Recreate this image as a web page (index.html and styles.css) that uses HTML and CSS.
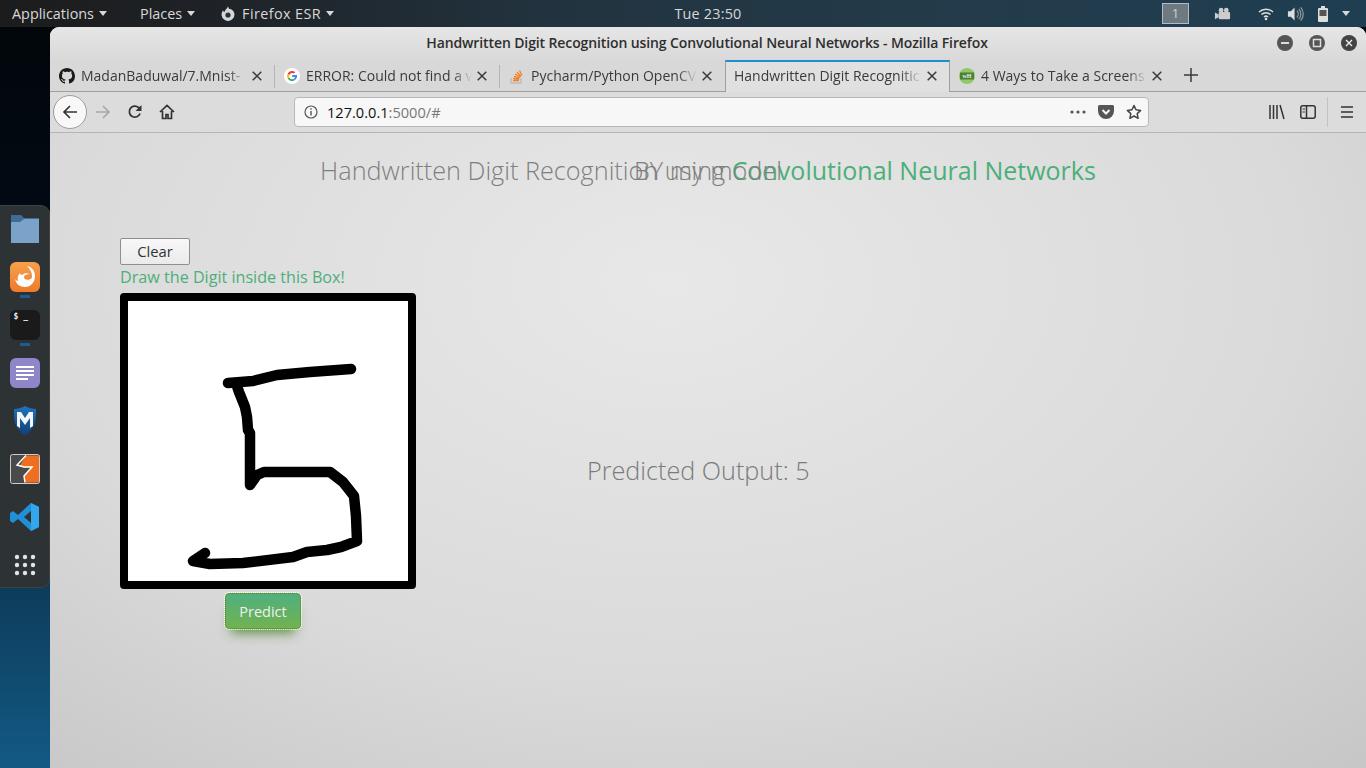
FILE: index.html
```html
<!DOCTYPE html>
<html lang="en">
<head>
<meta charset="utf-8">
<title>Handwritten Digit Recognition</title>
<link rel="stylesheet" href="styles.css">
</head>
<body>
<header class="topbar">
  <div class="top-left">
    <span class="top-item">Applications<i class="caret"></i></span>
    <span class="top-item">Places<i class="caret"></i></span>
    <span class="top-item"><svg class="ff-mini" viewBox="0 0 16 16"><path d="M8 0.5l1 2.2c3 .3 5.5 2.7 5.5 5.8A6.5 6.5 0 0 1 1.6 9.6C1.3 7.6 2 5.6 3.3 4.3c0 1 .4 1.6 1 2C5 4.2 6.5 3 8 .5z" fill="#d6d6d6"/><circle cx="8" cy="9" r="2.6" fill="#26323a"/></svg>Firefox ESR<i class="caret"></i></span>
  </div>
  <div class="clock">Tue 23:50</div>
  <div class="top-right">
    <span class="ws">1</span>
    <svg class="tray cam" viewBox="0 0 18 14"><circle cx="7.5" cy="3" r="2.5" fill="#ccc"/><circle cx="13" cy="3" r="2.5" fill="#ccc"/><rect x="5" y="5" width="12" height="7.5" rx="1" fill="#ccc"/><path d="M1 5.5l4 2v3l-4 2z" fill="#ccc"/></svg>
    <svg class="tray wifi" viewBox="0 0 16 14"><g fill="none" stroke="#ddd" stroke-width="1.5"><path d="M1 5a10 10 0 0 1 14 0"/><path d="M3.5 7.5a6.5 6.5 0 0 1 9 0"/><path d="M6 10a3 3 0 0 1 4 0"/></g><circle cx="8" cy="12" r="1.3" fill="#ddd"/></svg>
    <svg class="tray vol" viewBox="0 0 18 16"><path d="M1 5h3l4-4v14l-4-4H1z" fill="#ddd"/><g fill="none" stroke="#999" stroke-width="1.3"><path d="M10.5 4.5a5 5 0 0 1 0 7"/><path d="M12.5 2.5a8 8 0 0 1 0 11"/><path d="M14.5 1a10.5 10.5 0 0 1 0 14"/></g></svg>
    <svg class="tray batt" viewBox="0 0 12 16"><rect x="4" y="0" width="4" height="2" fill="#ddd"/><rect x="1" y="2" width="10" height="14" rx="1" fill="#ddd"/><rect x="2.5" y="4" width="7" height="6" fill="#555"/></svg>
    <i class="caret caret-tray"></i>
  </div>
</header>

<div class="desk">
  <aside class="dock">
    <svg class="dock-icon" viewBox="0 0 30 30"><path d="M1 1h10l3 3h15v25H1z" fill="#3f6c93"/><path d="M1 8h9l4-3h15v24H1z" fill="#7ba3c9"/></svg>
    <div class="dock-slot">
      <svg class="dock-icon" viewBox="0 0 30 30"><defs><linearGradient id="ffbg" x1="0" y1="0" x2="0" y2="1"><stop offset="0" stop-color="#f6a04a"/><stop offset="1" stop-color="#ee7b2c"/></linearGradient></defs><rect width="30" height="30" rx="6" fill="url(#ffbg)"/><path d="M17 4c5 1 8 5 8 10 0 6-4 11-10 11-5 0-9-3-10-8 1 1 2 2 3 2-1-3 0-6 2-8 0 1 1 2 2 2 2-2 5-2 8-1-3 0-6 1-6 3 0 3 5 4 8 1-1 3-4 5-7 4 4 1 7-2 7-6 0-4-2-7-5-10z" fill="#fff"/></svg>
      <i class="run-dot"></i>
    </div>
    <div class="dock-slot">
      <div class="term">$ _</div>
      <i class="run-dot"></i>
    </div>
    <svg class="dock-icon" viewBox="0 0 30 30"><rect width="30" height="30" rx="6" fill="#8f86c9"/><path d="M6 8h18v2H6zM6 12h18v2H6zM6 16h18v2H6zM6 20h12v2H6z" fill="#fff"/></svg>
    <svg class="dock-icon" viewBox="0 0 30 30"><defs><linearGradient id="msf" x1="0" y1="0" x2="0" y2="1"><stop offset="0" stop-color="#1f74bd"/><stop offset="1" stop-color="#123f70"/></linearGradient></defs><path d="M15 0c3 2 8 3 11 3 0 9 1 18-11 27C3 21 4 12 4 3c3 0 8-1 11-3z" fill="url(#msf)"/><path d="M7 20V6h4l4 6 4-6h4v14l-3 2V12l-5 7-5-7v10z" fill="#f2f6fa"/></svg>
    <svg class="dock-icon" viewBox="0 0 30 30"><rect x=".5" y=".5" width="29" height="29" rx="2" fill="#4a4a4a" stroke="#ccc"/><path d="M16 1.5h13v27H15l-1-6 8-9h-8l-4-2z" fill="#ef6f22"/><path d="M16 1.5L7 11l7 2h8l-8 9 1 6.5" fill="none" stroke="#fff" stroke-width="1.5"/></svg>
    <svg class="dock-icon" viewBox="0 0 30 30"><path d="M21 1l8 4v20l-8 4L8 17l-5 4-3-2v-8l3-2 5 4zM21 9l-7 6 7 6z" fill="#1f8fd8"/><path d="M21 1l8 4v20l-8 4z" fill="#34a7ec"/></svg>
    <svg class="dock-icon" viewBox="0 0 30 30"><g fill="#e2e4e5"><circle cx="7" cy="7" r="2.2"/><circle cx="15" cy="7" r="2.2"/><circle cx="23" cy="7" r="2.2"/><circle cx="7" cy="15" r="2.2"/><circle cx="15" cy="15" r="2.2"/><circle cx="23" cy="15" r="2.2"/><circle cx="7" cy="23" r="2.2"/><circle cx="15" cy="23" r="2.2"/><circle cx="23" cy="23" r="2.2"/></g></svg>
  </aside>

  <main class="window">
    <div class="titlebar">
      <span class="title">Handwritten Digit Recognition using Convolutional Neural Networks - Mozilla Firefox</span>
      <div class="win-btns">
        <svg viewBox="0 0 16 16"><circle cx="8" cy="8" r="8" fill="#555"/><rect x="4" y="7" width="8" height="2" fill="#ddd"/></svg>
        <svg viewBox="0 0 16 16"><circle cx="8" cy="8" r="8" fill="#555"/><rect x="4.5" y="4.5" width="7" height="7" fill="none" stroke="#ddd" stroke-width="1.5"/></svg>
        <svg viewBox="0 0 16 16"><circle cx="8" cy="8" r="8" fill="#444"/><path d="M5 5l6 6M11 5l-6 6" stroke="#eee" stroke-width="1.4"/></svg>
      </div>
    </div>

    <nav class="tabs">
      <div class="tab">
        <svg class="fav" viewBox="0 0 16 16"><path fill="#1a1a1a" d="M8 0C3.58 0 0 3.58 0 8c0 3.54 2.29 6.53 5.47 7.59.4.07.55-.17.55-.38 0-.19-.01-.82-.01-1.49-2.01.37-2.53-.49-2.69-.94-.09-.23-.48-.94-.82-1.13-.28-.15-.68-.52-.01-.53.63-.01 1.08.58 1.23.82.72 1.21 1.87.87 2.33.66.07-.52.28-.87.51-1.07-1.78-.2-3.64-.89-3.64-3.95 0-.87.31-1.59.82-2.15-.08-.2-.36-1.02.08-2.12 0 0 .67-.21 2.2.82.64-.18 1.32-.27 2-.27s1.36.09 2 .27c1.53-1.04 2.2-.82 2.2-.82.44 1.1.16 1.92.08 2.12.51.56.82 1.27.82 2.15 0 3.07-1.87 3.75-3.65 3.95.29.25.54.73.54 1.48 0 1.07-.01 1.93-.01 2.2 0 .21.15.46.55.38A8.01 8.01 0 0 0 16 8c0-4.42-3.58-8-8-8z"/></svg>
        <span class="tab-text">MadanBaduwal/7.Mnist-</span><svg class="x" viewBox="0 0 10 10"><path d="M.7.7l8.600 8.600M9.300.7L.7 9.300"/></svg>
      </div>
      <div class="tab">
        <svg class="fav" viewBox="0 0 16 16"><circle cx="8" cy="8" r="8" fill="#fff"/><path d="M3.7 10.6a5 5 0 0 0 7.4 1.4L9.8 10.8a3 3 0 0 1-4.5-1.4z" fill="#34a853"/><path d="M5.3 9.4a3 3 0 0 1 0-2.4L3.7 5.4a5 5 0 0 0 0 5.2z" fill="#fbbc05"/><path d="M5.3 7a3 3 0 0 1 4.6-1.4l1.4-1.4A5 5 0 0 0 3.7 5.4z" fill="#ea4335"/><path d="M13 7H8.2v2h2.8c-.2.7-.6 1.3-1.2 1.8l1.3 1.2C12.5 11 13.3 9.3 13 7z" fill="#4285f4"/></svg>
        <span class="tab-text">ERROR: Could not find a v</span><svg class="x" viewBox="0 0 10 10"><path d="M.7.7l8.600 8.600M9.300.7L.7 9.300"/></svg>
      </div>
      <div class="tab">
        <svg class="fav" viewBox="0 0 16 16"><path d="M2 10v5h10v-5" fill="none" stroke="#bbb" stroke-width="1.3"/><path d="M4 12.5h6M4.2 10.5l6 .5M4.8 8.3l5.800 1.500M6 6l5.200 3M8 4l4 4.500M10.500 2.500l2.500 5" stroke="#f48024" stroke-width="1.3"/></svg>
        <span class="tab-text">Pycharm/Python OpenCV</span><svg class="x" viewBox="0 0 10 10"><path d="M.7.7l8.600 8.600M9.300.7L.7 9.300"/></svg>
      </div>
      <div class="tab tab-active">
        <span class="tab-text">Handwritten Digit Recognitic</span><svg class="x" viewBox="0 0 10 10"><path d="M.7.7l8.600 8.600M9.300.7L.7 9.300"/></svg>
      </div>
      <div class="tab tab-last">
        <svg class="fav" viewBox="0 0 16 16"><circle cx="8" cy="8" r="8" fill="#8fc968"/><rect x="1" y="4.5" width="14" height="7" fill="#4f7f3a"/><text x="8" y="10.3" class="wh">wH</text></svg>
        <span class="tab-text">4 Ways to Take a Screens</span><svg class="x" viewBox="0 0 10 10"><path d="M.7.7l8.600 8.600M9.300.7L.7 9.300"/></svg>
      </div>
      <svg class="plus" viewBox="0 0 14 14"><path d="M7 0v14M0 7h14" stroke="#3a3a3a" stroke-width="1.5"/></svg>
    </nav>

    <div class="navbar">
      <span class="back"><svg viewBox="0 0 16 16"><path d="M15 8H2M8 2L2 8l6 6" fill="none" stroke="#333" stroke-width="1.7"/></svg></span>
      <svg class="nav-ic fwd" viewBox="0 0 16 16"><path d="M1 8h13M8 2l6 6-6 6" fill="none" stroke="#a8a8a8" stroke-width="1.7"/></svg>
      <svg class="nav-ic reload" viewBox="0 0 16 16"><path d="M13 9.5A5.5 5.5 0 1 1 11.5 3.5L13.5 5.5" fill="none" stroke="#333" stroke-width="1.8"/><path d="M14.5 1v6h-6z" fill="#333"/></svg>
      <svg class="nav-ic home" viewBox="0 0 16 16"><path d="M1 8l7-6.5L15 8M3.5 7v7.5h3.5v-4h2v4h3.5V7" fill="none" stroke="#333" stroke-width="1.7"/></svg>
      <div class="urlbar">
        <svg class="info" viewBox="0 0 14 14"><circle cx="7" cy="7" r="6" fill="none" stroke="#555" stroke-width="1.2"/><path d="M7 6v4.5M7 3.3v1.5" stroke="#555" stroke-width="1.4"/></svg>
        <span class="host">127.0.0.1</span><span class="rest">:5000/#</span>
        <span class="url-spacer"></span>
        <svg class="dots" viewBox="0 0 16 4"><circle cx="2" cy="2" r="1.6" fill="#555"/><circle cx="8" cy="2" r="1.6" fill="#555"/><circle cx="14" cy="2" r="1.6" fill="#555"/></svg>
        <svg class="pocket" viewBox="0 0 16 14"><path d="M1.5 0h13A1.5 1.5 0 0 1 16 1.5V6A8 8 0 0 1 0 6V1.5A1.5 1.5 0 0 1 1.5 0z" fill="#555"/><path d="M4.5 5L8 8.5 11.5 5" fill="none" stroke="#f4f4f4" stroke-width="2"/></svg>
        <svg class="star" viewBox="0 0 16 16"><path d="M8 1.5l2 4.3 4.7.6-3.5 3.2.9 4.7L8 12l-4.100 2.300.9-4.700L1.300 6.400 6 5.800z" fill="none" stroke="#444" stroke-width="1.5" stroke-linejoin="round"/></svg>
      </div>
      <svg class="nav-ic lib" viewBox="0 0 16 14"><path d="M1 0v14M4.5 0v14M8 0v14M11 0l4 14" stroke="#333" stroke-width="1.5" fill="none"/></svg>
      <svg class="nav-ic side" viewBox="0 0 16 14"><rect x=".8" y=".8" width="14.4" height="12.4" rx="2" fill="none" stroke="#333" stroke-width="1.5"/><path d="M6.5 1v12" stroke="#333" stroke-width="1.5"/><path d="M2.5 4h2.5M2.5 7h2.5" stroke="#333"/></svg>
      <i class="nav-sep"></i>
      <svg class="nav-ic menu" viewBox="0 0 14 12"><path d="M1 1h12M1 6h12M1 11h12" stroke="#333" stroke-width="1.5"/></svg>
    </div>

    <section class="page">
      <h1 class="heading">Handwritten Digit Recognition using <span class="accent">Convolutional Neural Networks</span></h1>
      <h2 class="byline">BY my model</h2>
      <div class="work">
        <div class="left">
          <button class="clear">Clear</button>
          <div class="hint">Draw the Digit inside this Box!</div>
          <div class="canvas">
            <svg viewBox="0 0 280 280" width="280" height="280">
              <path d="M100 82L125 80 149 74 182 71 223 68" fill="none" stroke="#000" stroke-width="10.5" stroke-linecap="round" stroke-linejoin="round"/>
              <path d="M109 85L111 91 117 106 119 116 120 129 122 132 122 184 129 174 136 171 202 171 215 181 226 195 228 215 229 240 213 246 199 249 179 251 165 256 115 262 82 263 65 260 77 252" fill="none" stroke="#000" stroke-width="10.5" stroke-linecap="round" stroke-linejoin="round"/>
            </svg>
          </div>
          <div class="predict-row"><button class="predict">Predict</button></div>
        </div>
        <div class="output">Predicted Output: 5</div>
      </div>
    </section>
  </main>
</div>
</body>
</html>
```
FILE: styles.css
```css
* { box-sizing: border-box; }
html, body { margin: 0; height: 768px; overflow: hidden; }
body {
  width: 1366px;
  font-family: "Open Sans", "Noto Sans", sans-serif;
  background: linear-gradient(180deg, #02060a 0, #020a14 30%, #0d3a58 75%, #125a84 100%);
  display: flex;
  flex-direction: column;
}
.topbar {
  height: 27px;
  flex: none;
  display: grid;
  grid-template-columns: 1fr auto 1fr;
  align-items: center;
  background: linear-gradient(90deg, #1c1c1c 0, #1e2226 15%, #22333f 40%, #233b4a 70%, #1f3e52 100%);
  color: #d8d8d8;
  font-size: 14.4px;
  font-weight: 500;
}
.top-left { display: flex; align-items: center; padding-left: 12px; }
.top-item { display: flex; align-items: center; margin-right: 25px; white-space: nowrap; }
.top-item:first-child { margin-right: 33px; }
.top-item:last-child { letter-spacing: .4px; margin-right: 0; }
.caret { display: inline-block; width: 0; height: 0; margin-left: 5px; border: 4.5px solid transparent; border-top: 5px solid #d8d8d8; border-bottom: 0; }
.ff-mini { width: 16px; height: 16px; margin-right: 6px; }
.clock { text-align: center; margin-left: 50px; letter-spacing: .2px; }
.top-right { display: flex; align-items: center; justify-content: flex-end; padding-right: 16px; }
.ws { width: 27px; height: 21px; background: #6e7a82; border: 1px solid #b5bcc0; color: #cfd4d6; font-size: 13px; text-align: center; line-height: 19px; margin-right: 25px; }
.tray { display: block; }
.cam { width: 17px; height: 14px; margin-right: 27px; }
.wifi { width: 16px; height: 14px; margin-right: 13px; }
.vol { width: 17px; height: 16px; margin-right: 13px; }
.batt { width: 12px; height: 16px; margin-right: 13px; }
.caret-tray { margin-left: 0; }

.desk { flex: 1; display: flex; position: relative; padding-left: 50px; min-height: 0; }
.dock {
  position: absolute;
  left: 0;
  top: 178px;
  width: 50px;
  height: 383px;
  background: #2d3235;
  border-radius: 0 9px 9px 0;
  border: 1px solid #3c4143;
  border-left: 0;
  display: flex;
  flex-direction: column;
  align-items: center;
  padding-top: 8px;
  gap: 18px;
}
.dock-icon { width: 30px; height: 30px; display: block; flex: none; }
.dock-slot { position: relative; width: 30px; height: 30px; flex: none; }
.run-dot { position: absolute; left: 10px; bottom: -6px; width: 10px; height: 3px; background: #1e5a96; }
.term { width: 30px; height: 30px; border-radius: 6px; background: #1a1a1a; color: #eee; font: 700 8px/12px "DejaVu Sans Mono", monospace; padding: 1px 0 0 4px; }

.window {
  flex: 1;
  min-width: 0;
  display: flex;
  flex-direction: column;
  border-radius: 9px 9px 0 0;
  overflow: hidden;
  background: #dcdcdc;
}
.titlebar {
  height: 35px;
  flex: none;
  display: flex;
  align-items: center;
  justify-content: center;
  padding: 0 2px 4px 0;
  position: relative;
  background: linear-gradient(180deg, #e6e6e6, #d8d8d8);
}
.title { font: 600 14px "Open Sans", sans-serif; color: #2e2e2e; letter-spacing: -0.11px; }
.win-btns { position: absolute; right: 9px; top: 8px; display: flex; gap: 16px; }
.win-btns svg { width: 16px; height: 16px; display: block; }

.tabs {
  height: 30px;
  flex: none;
  display: flex;
  align-items: stretch;
  background: #d8d8d8;
  border-bottom: 1px solid #9e9e9e;
  color: #3a3a3a;
  font-size: 14px;
}
.tab {
  width: 225px;
  display: flex;
  align-items: center;
  padding: 0 13px 2px 9px;
  position: relative;
}
.tab + .tab::before { content: ""; position: absolute; left: -1px; top: 3px; height: 23px; width: 1px; background: #b4b4b4; }
.tab-active { background: #e0e0e0; border: 1px solid #9e9e9e; border-top: 2px solid #1f8ccb; border-bottom: 0; height: 32px; margin-top: -2px; padding: 0 12px 3px 8px; }
.tab-active::before, .tab-last::before { display: none; }
.fav { width: 16px; height: 16px; flex: none; margin-right: 6px; }
.wh { font: 700 6px "Liberation Serif", serif; fill: #e8f2e0; text-anchor: middle; }
.tab-text { flex: 1; min-width: 0; overflow: hidden; white-space: nowrap; -webkit-mask-image: linear-gradient(90deg, #000 88%, transparent); mask-image: linear-gradient(90deg, #000 88%, transparent); }
.x { flex: none; width: 10px; height: 10px; margin-left: 5px; fill: none; stroke: #3a3a3a; stroke-width: 1.5; }
.plus { width: 14px; height: 14px; align-self: center; margin: 0 0 3px 9px; }

.navbar {
  height: 41px;
  flex: none;
  display: flex;
  align-items: center;
  background: #dcdcdc;
  border-bottom: 1px solid #b5b5b5;
  padding-left: 3px;
}
.back { width: 34px; height: 34px; border-radius: 50%; background: #f8f8f8; border: 1px solid #9c9c9c; display: flex; align-items: center; justify-content: center; flex: none; }
.back svg { width: 16px; height: 16px; }
.nav-ic { width: 16px; height: 16px; flex: none; display: block; }
.fwd { margin-left: 8px; }
.reload { margin-left: 16px; }
.home { margin-left: 16px; }
.urlbar {
  width: 855px;
  height: 30px;
  flex: none;
  margin-left: 119px;
  background: #f7f7f7;
  border: 1px solid #b8b8b8;
  border-radius: 4px;
  display: flex;
  align-items: center;
  padding: 0 6px 0 9px;
  font-size: 14.6px;
}
.info { width: 14px; height: 14px; margin-right: 9px; flex: none; }
.host { color: #111; }
.rest { color: #777; }
.url-spacer { flex: 1; }
.dots { width: 16px; height: 4px; margin-right: 12px; }
.pocket { width: 16px; height: 14px; margin-right: 12px; }
.star { width: 16px; height: 16px; }
.lib { margin-left: 120px; }
.side { margin-left: 15px; }
.nav-sep { width: 1px; height: 30px; background: #c2c2c2; margin-left: 11px; flex: none; }
.menu { width: 14px; height: 12px; margin-left: 12px; }

.page {
  flex: 1;
  min-height: 0;
  position: relative;
  background: radial-gradient(ellipse 1050px 660px at 620px 150px, #e8e8e8 0, #dadada 60%, #c6c6c6 100%);
  padding: 20px 70px 0;
}
.heading, .byline {
  margin: 0;
  font-family: "Open Sans", sans-serif;
  font-weight: 300;
  font-size: 25.25px;
  line-height: 34px;
  color: #7f7f7f;
  text-align: center;
}
.heading { margin-left: 200px; width: 776px; white-space: nowrap; }
.accent { color: #4caf7a; font-weight: 400; font-size: 25px; }
.byline { position: absolute; left: 584px; top: 20px; white-space: nowrap; }
.work { display: flex; margin-top: 51px; }
.left { width: 296px; flex: none; }
.clear {
  display: block;
  width: 70px;
  height: 27px;
  padding: 0 0 2px;
  background: linear-gradient(#f7f7f7, #ebebeb);
  border: 1px solid #8f8f8f;
  border-radius: 2px;
  font: 14.8px "Open Sans", sans-serif;
  color: #333;
}
.hint { color: #4caf7a; font-size: 16.15px; line-height: 22px; margin-top: 1px; margin-bottom: 5px; white-space: nowrap; }
.canvas { width: 296px; height: 296px; border: 8px solid #000; border-radius: 4px; background: #fff; }
.canvas svg { display: block; }
.predict-row { margin-top: 4px; padding-left: 105px; }
.predict {
  display: block;
  width: 76px;
  height: 36px;
  padding: 0;
  border: 1px solid #5c9c3e;
  outline: 1px dotted #fff;
  border-radius: 4px;
  background: linear-gradient(#4fb07f, #71b24f);
  color: #f0f0f0;
  font: 14.5px "Open Sans", sans-serif;
  box-shadow: 0 10px 12px -6px rgba(70, 130, 40, .85);
}
.output { font-weight: 300; font-size: 25.2px; color: #7b7b7b; margin: 216px 0 0 171px; white-space: nowrap; line-height: 33px; }
```
